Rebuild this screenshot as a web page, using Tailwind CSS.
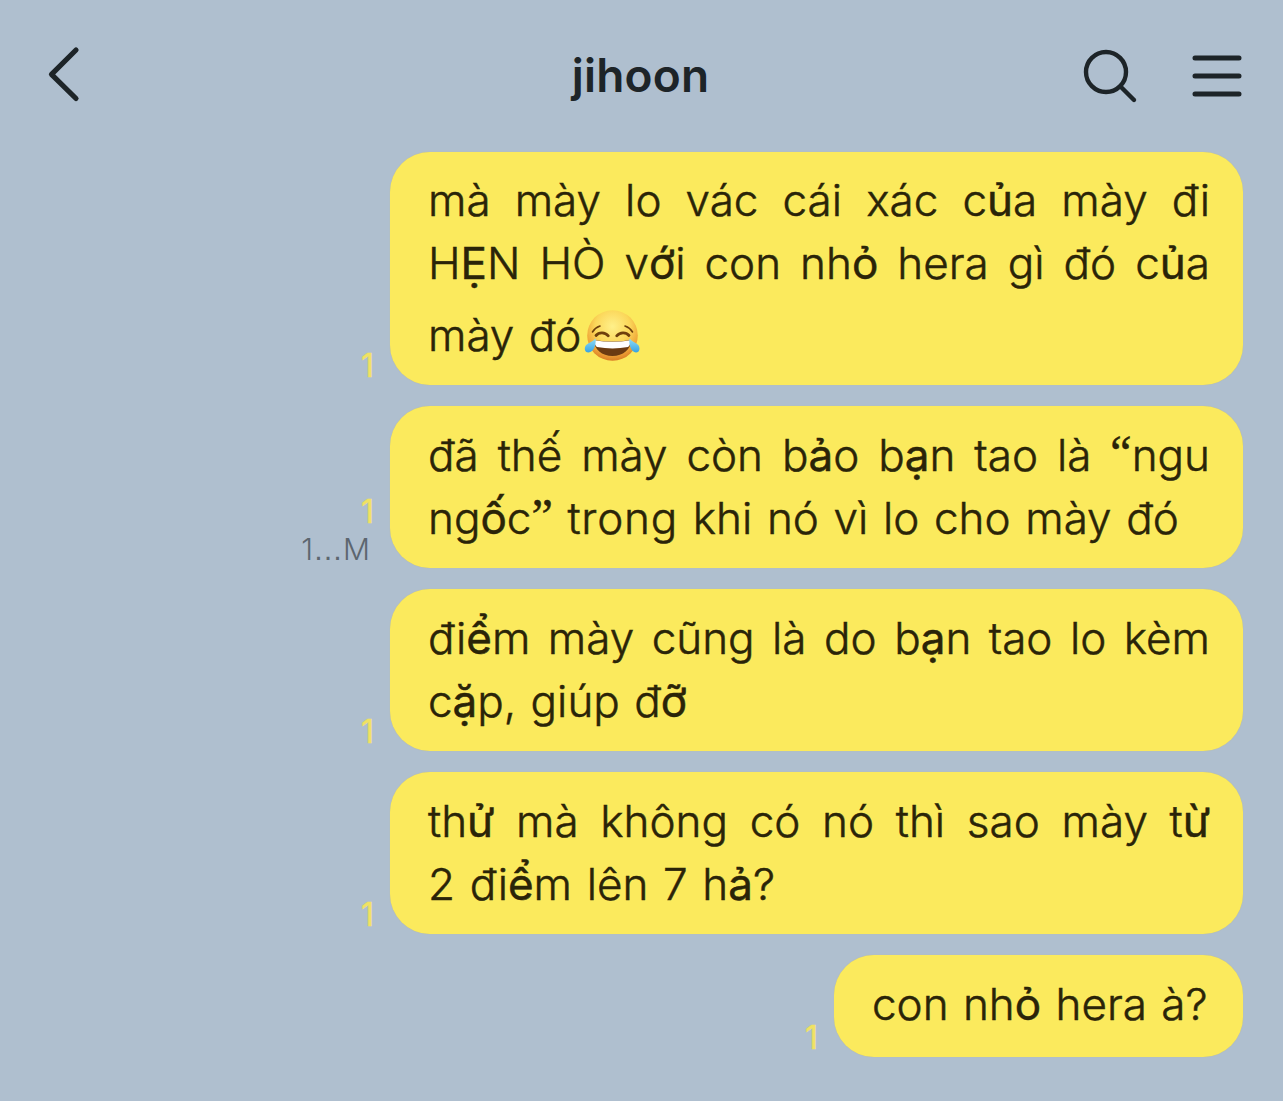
<!DOCTYPE html>
<html lang="vi">
<head>
  <meta charset="UTF-8">
  <meta name="viewport" content="width=device-width, initial-scale=1">
  <title>jihoon</title>
  <script src="https://cdn.jsdelivr.net/npm/@tailwindcss/browser@4"></script>
</head>
<body class="bg-[#afbfcf] font-['Inter',sans-serif] h-[1101px] overflow-hidden">

  <header class="flex items-center justify-between h-[152px] pl-[44px] pr-[38px]">
    <button class="w-[152px] pb-1" aria-label="Back">
      <svg class="block w-10 h-[64px]" viewBox="0 0 40 64" fill="none" stroke="#1d2428" stroke-width="5.2" stroke-linecap="round" stroke-linejoin="round">
        <path d="M32 8L7.500 32.300L32 56.500"/>
      </svg>
    </button>
    <h1 class="text-[46px] font-semibold text-[#1d2428] tracking-[0.2px] pb-[2px]">jihoon</h1>
    <div class="flex items-center justify-between w-[160px]">
      <svg class="w-[56px] h-[56px] overflow-visible" viewBox="4 0 56 56" fill="none" stroke="#1d2428" stroke-width="4.400" stroke-linecap="round">
        <circle cx="25" cy="24" r="20"/>
        <path d="M39.500 38.500L53 52"/>
      </svg>
      <svg class="w-[56px] h-[56px]" viewBox="0 0 56 56" fill="none" stroke="#1d2428" stroke-width="5" stroke-linecap="round">
        <path d="M6 10H50M6 28H50M6 46H50"/>
      </svg>
    </div>
  </header>

  <main class="flex flex-col gap-[21px] pr-10 text-[44px] leading-[63px] font-light [-webkit-text-stroke:0.5px] text-[#2a2408]">

    <div class="flex items-end justify-end gap-4">
      <span class="text-[32px] leading-[38px] font-normal text-[#f0e263]">1</span>
      <div class="w-[853px] h-[233px] rounded-[40px] bg-[#fbea5d] shadow-[0_0_1px_rgba(200,190,110,0.8)] pt-[17px] pl-[38px] pr-[33px]">
        <p class="[text-align-last:justify]">mà mày lo vác cái xác c<span class="font-normal">ủ</span>a mày đi</p>
        <p class="[text-align-last:justify]">H<span class="font-normal">Ẹ</span>N HÒ v<span class="font-normal">ớ</span>i con nh<span class="font-normal">ỏ</span> hera gì đó c<span class="font-normal">ủ</span>a</p>
        <p class="flex items-center gap-1 pt-[9px] [word-spacing:2px]">
          <span>mày đó</span>
          <!-- laughing with tears -->
          <svg class="w-[54px] h-[52px] overflow-visible" viewBox="0 0 54 52" role="img" aria-label="😂">
            <defs>
              <radialGradient id="face" cx="0.5" cy="0.32" r="0.68">
                <stop offset="0" stop-color="#fff08a"/>
                <stop offset="0.5" stop-color="#fbd75a"/>
                <stop offset="0.8" stop-color="#f0a83a"/>
                <stop offset="1" stop-color="#da7d24"/>
              </radialGradient>
              <linearGradient id="tear" x1="0" y1="0" x2="0" y2="1">
                <stop offset="0" stop-color="#8fdcf8"/>
                <stop offset="1" stop-color="#37a3e2"/>
              </linearGradient>
            </defs>
            <circle cx="27.500" cy="25.500" r="25.300" fill="url(#face)"/>
            <g fill="none" stroke="#6e3f0c" stroke-linecap="round">
              <path stroke-width="1.600" d="M7.500 22C9.500 18.500 12 17 15 16M47.500 22C45.500 18.500 43 17 40 16"/>
              <path stroke-width="2.800" d="M11 25.500C14 22 20 22 23.300 25.800M31.700 25.800C35 22 41 22 44 25.500"/>
            </g>
            <path fill="#6b3b12" d="M9 30Q27.500 33 46 30C46 39.500 38 46 27.500 46C17 46 9 39.500 9 30Z"/>
            <path fill="#fff" d="M9.500 30.300Q27.500 33.300 45.500 30.300Q45.500 35.500 43 37Q27.500 39.800 12 37Q9.500 35.500 9.500 30.300Z"/>
            <path fill="url(#tear)" d="M10.500 28.500C11.500 33.500 9 42.500 3.500 42.500C-0.800 42.500 -1.200 37.500 1.500 34.800C4 32.500 8 31.500 10.500 28.500Z"/>
            <path fill="url(#tear)" d="M44.500 28.500C43.500 33.500 46 42.500 51 42.500C55 42.500 55.500 37.500 53 34.800C50.500 32.500 47 31.500 44.500 28.500Z"/>
          </svg>
        </p>
      </div>
    </div>

    <div class="flex items-end justify-end gap-4">
      <div class="flex flex-col items-end">
        <span class="text-[32px] leading-[38px] font-normal text-[#f0e263]">1</span>
        <span class="text-[30px] leading-9 [-webkit-text-stroke:0] text-[#5c666f] pr-1">1<span class="font-['Liberation_Sans',sans-serif]">…</span>M</span>
      </div>
      <div class="w-[853px] h-[162px] rounded-[40px] bg-[#fbea5d] shadow-[0_0_1px_rgba(200,190,110,0.8)] pt-[18px] pl-[38px] pr-[33px]">
        <p class="[text-align-last:justify]">đã thế mày còn b<span class="font-normal">ả</span>o b<span class="font-normal">ạ</span>n tao là <span class="font-['Liberation_Serif',serif] text-[48px] leading-none align-[2px]">“</span>ngu</p>
        <p class="[word-spacing:2.3px]">ng<span class="font-normal">ố</span>c<span class="font-['Liberation_Serif',serif] text-[48px] leading-none align-[2px]">”</span> <span class="tracking-[0.8px]">trong</span> khi nó vì lo cho mày đó</p>
      </div>
    </div>

    <div class="flex items-end justify-end gap-4">
      <span class="text-[32px] leading-[38px] font-normal text-[#f0e263]">1</span>
      <div class="w-[853px] h-[162px] rounded-[40px] bg-[#fbea5d] shadow-[0_0_1px_rgba(200,190,110,0.8)] pt-[18px] pl-[38px] pr-[33px]">
        <p class="[text-align-last:justify]">đi<span class="font-normal">ể</span>m mày cũng là do b<span class="font-normal">ạ</span>n tao lo kèm</p>
        <p class="[word-spacing:2px]">c<span class="font-normal">ặ</span>p, giúp đ<span class="font-normal">ỡ</span></p>
      </div>
    </div>

    <div class="flex items-end justify-end gap-4">
      <span class="text-[32px] leading-[38px] font-normal text-[#f0e263]">1</span>
      <div class="w-[853px] h-[162px] rounded-[40px] bg-[#fbea5d] shadow-[0_0_1px_rgba(200,190,110,0.8)] pt-[18px] pl-[38px] pr-[33px]">
        <p class="[text-align-last:justify]">th<span class="font-normal">ử</span> mà không có nó thì sao mày t<span class="font-normal">ừ</span></p>
        <p class="[word-spacing:2.3px]">2 đi<span class="font-normal">ể</span>m lên 7 h<span class="font-normal">ả</span>?</p>
      </div>
    </div>

    <div class="flex items-end justify-end gap-4">
      <span class="text-[32px] leading-[38px] font-normal text-[#f0e263]">1</span>
      <div class="w-[409px] h-[102px] rounded-[40px] bg-[#fbea5d] shadow-[0_0_1px_rgba(200,190,110,0.8)] pt-[18px] pl-[38px]">
        <p class="[word-spacing:2px]">con nh<span class="font-normal">ỏ</span> hera à?</p>
      </div>
    </div>

  </main>

</body>
</html>
